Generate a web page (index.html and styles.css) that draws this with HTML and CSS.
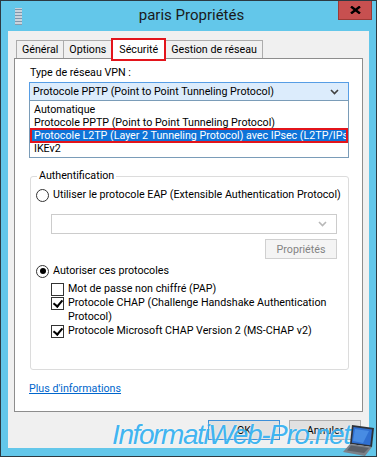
FILE: index.html
```html
<!DOCTYPE html>
<html lang="fr">
<head>
    <meta charset="UTF-8">
    <meta name="viewport" content="width=device-width, initial-scale=1.0">
    <title>paris Propriétés</title>
    <link rel="stylesheet" href="styles.css">
</head>
<body>
    <div class="window">
        <div class="titlebar">
            <svg class="app-icon" width="7" height="17" viewBox="0 0 7 17">
                <rect x="0" y="0" width="7" height="17" fill="#c9d3dc"/>
                <rect x="0" y="1" width="7" height="1" fill="#7f95aa"/>
                <rect x="0" y="4" width="7" height="1" fill="#7f95aa"/>
                <rect x="0" y="7" width="7" height="1" fill="#7f95aa"/>
                <rect x="0" y="10" width="7" height="1" fill="#7f95aa"/>
                <rect x="0" y="13" width="7" height="1" fill="#7f95aa"/>
                <rect x="0" y="16" width="7" height="1" fill="#8a9aa8"/>
            </svg>
            <div class="title">paris Propriétés</div>
            <div class="close">
                <svg width="11" height="8" viewBox="0 0 11 8">
                    <path d="M1 0.5 L10 7.5 M10 0.5 L1 7.5" stroke="#000" stroke-width="2.4"/>
                </svg>
            </div>
        </div>

        <div class="client">
            <div class="tabs">
                <div class="tab">Général</div>
                <div class="tab">Options</div>
                <div class="tab active">Sécurité</div>
                <div class="tab">Gestion de réseau</div>
            </div>

            <div class="panel">
                <div class="field-label">Type de réseau VPN :</div>
                <div class="combo-wrap">
                    <div class="combo open">
                        <span>Protocole PPTP (Point to Point Tunneling Protocol)</span>
                        <svg class="chevron" width="9" height="6" viewBox="0 0 9 6">
                            <path d="M1 1 L4.5 4.5 L8 1" fill="none" stroke="#404040" stroke-width="1.6"/>
                        </svg>
                    </div>
                    <ul class="dropdown">
                        <li>Automatique</li>
                        <li>Protocole PPTP (Point to Point Tunneling Protocol)</li>
                        <li class="selected">Protocole L2TP (Layer 2 Tunneling Protocol) avec IPsec (L2TP/IPsec)</li>
                        <li>IKEv2</li>
                    </ul>
                </div>

                <fieldset class="group">
                    <legend>Authentification</legend>
                    <div class="option">
                        <span class="radio"></span>
                        <span class="text">Utiliser le protocole EAP (Extensible Authentication Protocol)</span>
                    </div>
                    <div class="combo disabled">
                        <span></span>
                        <svg class="chevron" width="9" height="6" viewBox="0 0 9 6">
                            <path d="M1 1 L4.5 4.5 L8 1" fill="none" stroke="#b8b8b8" stroke-width="1.6"/>
                        </svg>
                    </div>
                    <div class="btn-row">
                        <button class="btn" disabled>Propriétés</button>
                    </div>
                    <div class="option">
                        <span class="radio checked"></span>
                        <span class="text">Autoriser ces protocoles</span>
                    </div>
                    <div class="checks">
                        <div class="option">
                            <span class="checkbox"></span>
                            <span class="text">Mot de passe non chiffré (PAP)</span>
                        </div>
                        <div class="option top">
                            <span class="checkbox checked"></span>
                            <span>Protocole CHAP (Challenge Handshake Authentication Protocol)</span>
                        </div>
                        <div class="option">
                            <span class="checkbox checked"></span>
                            <span class="text">Protocole Microsoft CHAP Version 2 (MS-CHAP v2)</span>
                        </div>
                    </div>
                </fieldset>

                <a class="more" href="#">Plus d'informations</a>
            </div>

            <div class="actions">
                <button class="btn default">OK</button>
                <button class="btn">Annuler</button>
            </div>
        </div>

        <div class="watermark">InformatiWeb-Pro.net</div>
        <svg class="laptop" width="34" height="34" viewBox="0 0 34 34">
            <path d="M9 2 L31 5 L29 24 L7 21 Z" fill="#2d3138"/>
            <path d="M10.5 4 L29 6.5 L27.3 22.3 L8.8 19.8 Z" fill="#2f6fd0"/>
            <path d="M12 6 L26 8 L20 20 L10 18 Z" fill="#5aa0f0" opacity="0.6"/>
            <path d="M7 21 L29 24 L22 33 L0 29 Z" fill="#7b8088"/>
            <path d="M8 22.5 L26 25 L21 30 L4 27.5 Z" fill="#5b6068"/>
        </svg>
    </div>
</body>
</html>
```

FILE: styles.css
```css
* {
    box-sizing: border-box;
}
body {
    margin: 0;
    font-family: Roboto, "Liberation Sans", sans-serif;
    font-size: 10.7px;
    color: #000;
}
.window {
    position: relative;
    width: 377px;
    height: 457px;
    overflow: hidden;
    background-color: #63c7ea;
    border: 1px solid #2c3a42;
}
.titlebar {
    height: 30px;
    display: flex;
    align-items: flex-start;
}
.app-icon {
    margin: 7px 0 0 14px;
}
.title {
    flex: 1;
    padding-left: 23px;
    text-align: center;
    font-size: 15px;
    line-height: 29px;
    color: #1a1a1a;
}
.close {
    width: 34px;
    height: 20px;
    margin-right: 4px;
    margin-top: -1px;
    display: flex;
    align-items: center;
    justify-content: center;
    background-color: #c75050;
    border: 1px solid #9b3a36;
}
.client {
    height: 417px;
    margin: 0 7px;
    padding-top: 7px;
    background-color: #f0f0f0;
}

/* tabs */
.tabs {
    display: flex;
    align-items: flex-end;
    height: 20px;
    padding-left: 8px;
}
.tab {
    height: 18px;
    padding: 0 5px;
    margin-right: -1px;
    line-height: 17px;
    border: 1px solid #acacac;
    border-bottom: none;
    background-color: #f0f0f0;
}
.tab.active {
    position: relative;
    z-index: 1;
    height: 23px;
    margin-bottom: -3px;
    padding: 0 6px;
    line-height: 19px;
    background-color: #fff;
    border: 2px solid #e3141b;
}
.panel {
    position: relative;
    width: 349px;
    height: 354px;
    margin-left: 6px;
    background-color: #fff;
    border: 1px solid #8d8d8d;
}
.field-label {
    margin: 7px 0 0 15px;
    line-height: 14px;
}

/* combobox */
.combo-wrap {
    position: relative;
    width: 320px;
    margin: 2px 0 0 14px;
}
.combo {
    display: flex;
    align-items: center;
    justify-content: space-between;
    height: 19px;
    padding: 0 9px 0 3px;
    border: 1px solid #adadad;
    background-color: #fff;
}
.combo.open {
    border-color: #569de5;
    background-color: #dcecfc;
}
.combo.disabled {
    width: 286px;
    height: 20px;
    margin: 12px 0 0 15px;
    border-color: #cccccc;
}
.dropdown {
    position: absolute;
    z-index: 2;
    top: 18px;
    left: 0;
    width: 320px;
    margin: 0;
    padding: 2px 1px;
    list-style: none;
    background-color: #fff;
    border: 1px solid #7a9cb8;
}
.dropdown li {
    height: 13px;
    padding-left: 3px;
    line-height: 13px;
    white-space: nowrap;
    overflow: hidden;
}
.dropdown li.selected {
    color: #fff;
    background-color: #0f74d8;
    outline: 2px solid #e3141b;
    outline-offset: -1px;
}

/* authentication group */
.group {
    width: 319px;
    height: 201px;
    margin: 68px 0 0 15px;
    padding: 5px 0 0 5px;
    border: 1px solid #dcdcdc;
    border-radius: 3px;
}
.group legend {
    padding: 0 2px;
    margin-left: 1px;
    line-height: 14px;
}
.option {
    display: flex;
    align-items: center;
    gap: 4px;
    line-height: 14px;
}
.option .text {
    white-space: nowrap;
}
.option.top {
    align-items: flex-start;
}
.option.top .checkbox {
    margin-top: 1px;
}
.radio {
    flex: none;
    position: relative;
    width: 13px;
    height: 13px;
    border: 1px solid #333;
    border-radius: 50%;
    background-color: #fff;
}
.radio.checked::after {
    content: "";
    position: absolute;
    left: 2.5px;
    top: 2.5px;
    width: 6px;
    height: 6px;
    border-radius: 50%;
    background-color: #000;
}
.checks {
    margin: 4px 0 0 15px;
    width: 288px;
}
.checkbox {
    flex: none;
    position: relative;
    width: 13px;
    height: 13px;
    border: 1px solid #333;
    background-color: #fff;
}
.checkbox.checked::after {
    content: "";
    position: absolute;
    left: 3px;
    top: 0px;
    width: 4px;
    height: 7px;
    border: solid #000;
    border-width: 0 2px 2px 0;
    transform: rotate(40deg);
}
.btn-row {
    display: flex;
    justify-content: flex-end;
    width: 301px;
    margin: 5px 0 5px 0;
}

/* buttons */
.btn {
    width: 72px;
    height: 20px;
    padding: 0;
    font-family: inherit;
    font-size: 10.7px;
    color: #000;
    background-color: #e1e1e1;
    border: 1px solid #adadad;
}
.btn:disabled {
    color: #838383;
    background-color: #f4f4f4;
    border-color: #d0d0d0;
}
.btn.default {
    border-color: #3c8fd8;
}
.more {
    display: inline-block;
    margin: 12px 0 0 14px;
    line-height: 14px;
    color: #0066cc;
}
.actions {
    display: flex;
    justify-content: flex-end;
    gap: 9px;
    margin-top: 8px;
    padding-right: 8px;
}

/* watermark overlay */
.watermark {
    position: absolute;
    left: 111px;
    top: 418px;
    font-family: "Liberation Sans", sans-serif;
    font-size: 28px;
    font-style: italic;
    letter-spacing: -1.4px;
    color: rgba(40, 172, 240, 0.9);
    text-shadow: 0 0 2px rgba(255, 255, 255, 0.7);
    white-space: nowrap;
}
.laptop {
    position: absolute;
    right: -1px;
    bottom: -1px;
}
```
